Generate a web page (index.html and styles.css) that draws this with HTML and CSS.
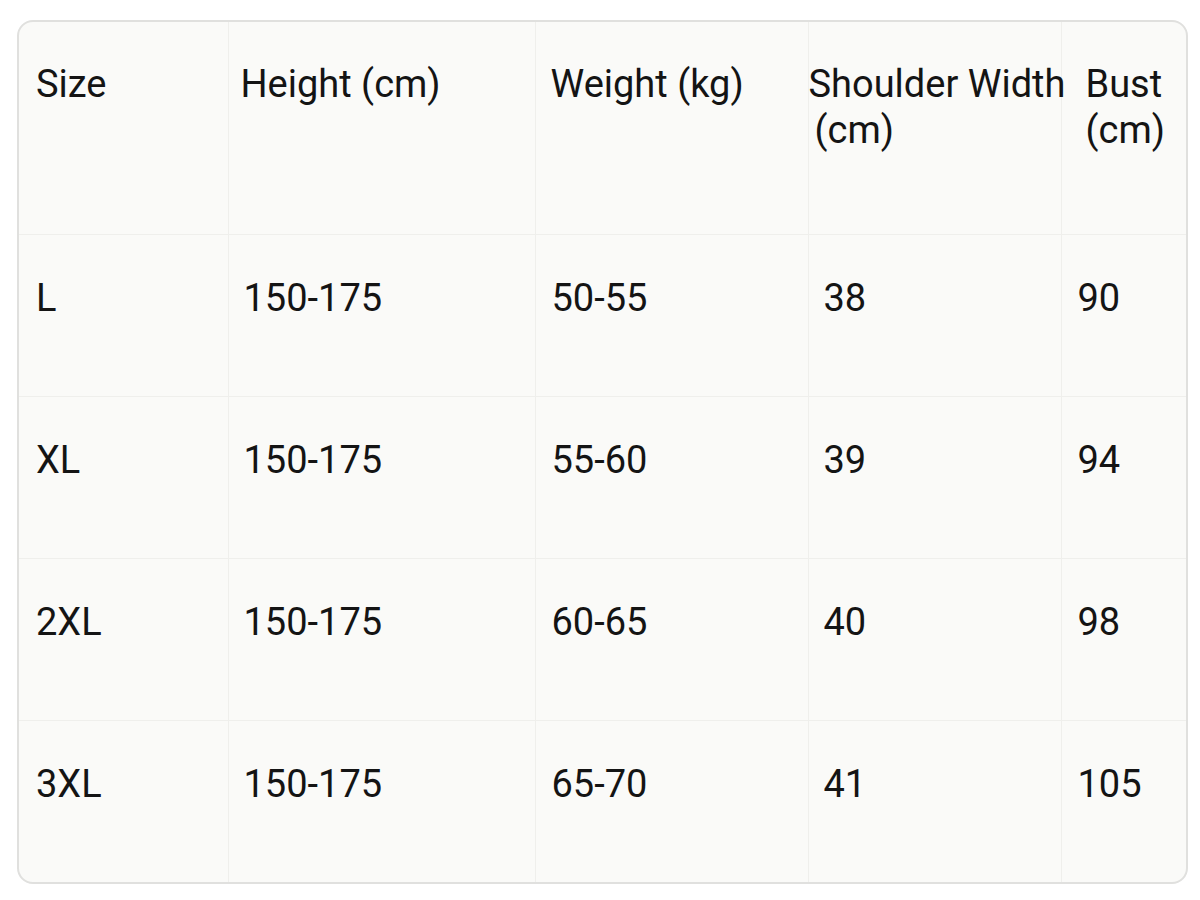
FILE: index.html
```html
<!DOCTYPE html>
<html lang="en">
<head>
<meta charset="utf-8">
<title>Size Chart</title>
<link rel="stylesheet" href="styles.css">
</head>
<body>
<div class="card">
  <table class="chart">
    <colgroup>
      <col class="w1"><col class="w2"><col class="w3"><col class="w4"><col class="w5">
    </colgroup>
    <thead>
      <tr class="head">
        <th class="c1">Size</th>
        <th class="c2 h2">Height (cm)</th>
        <th class="c3 h3">Weight (kg)</th>
        <th class="c4 h4"><span class="line">Shoulder Width</span><span class="line sub">(cm)</span></th>
        <th class="c5 h5"><span class="line">Bust</span><span class="line">(cm)</span></th>
      </tr>
    </thead>
    <tbody>
      <tr><td class="c1">L</td><td class="c2">150-175</td><td class="c3">50-55</td><td class="c4">38</td><td class="c5">90</td></tr>
      <tr><td class="c1">XL</td><td class="c2">150-175</td><td class="c3">55-60</td><td class="c4">39</td><td class="c5">94</td></tr>
      <tr><td class="c1">2XL</td><td class="c2">150-175</td><td class="c3">60-65</td><td class="c4">40</td><td class="c5">98</td></tr>
      <tr><td class="c1">3XL</td><td class="c2">150-175</td><td class="c3">65-70</td><td class="c4">41</td><td class="c5">105</td></tr>
    </tbody>
  </table>
</div>
</body>
</html>
```
FILE: styles.css
```css
html, body {
  margin: 0;
  padding: 0;
  background: #ffffff;
}

body {
  font-family: Roboto, "Noto Sans", "Liberation Sans", sans-serif;
  color: #141414;
}

.card {
  margin: 20px 0 0 17px;
  width: 1167px;
  height: 860px;
  border: 2px solid #e0e0de;
  border-radius: 16px;
  background: #fafaf8;
  overflow: hidden;
}

.chart {
  width: 100%;
  border-collapse: collapse;
  table-layout: fixed;
}

.w1 { width: 209px; }
.w2 { width: 307px; }
.w3 { width: 273px; }
.w4 { width: 253px; }
.w5 { width: auto; }

.chart th,
.chart td {
  font-size: 38px;
  font-weight: 400;
  line-height: 46px;
  text-align: left;
  vertical-align: top;
  padding: 40px 0 0 0;
  border-right: 1px solid #efefec;
  border-bottom: 1px solid #efefec;
  white-space: nowrap;
}

.chart tr > :last-child { border-right: none; }
.chart tbody tr:last-child td { border-bottom: none; }

.head th { height: 173px; padding-top: 39px; }
.chart td { height: 121px; }

.c1 { padding-left: 17px !important; }
.c2 { padding-left: 15px !important; }
.c3 { padding-left: 16px !important; }
.c4 { padding-left: 15px !important; }
.c5 { padding-left: 16px !important; }

.h2 { padding-left: 12px !important; }
.h3 { padding-left: 15px !important; }
.h4 { padding-left: 0 !important; overflow: visible; }
.h5 { padding-left: 24px !important; }

.line { display: block; }
.sub { padding-left: 6px; }
```
